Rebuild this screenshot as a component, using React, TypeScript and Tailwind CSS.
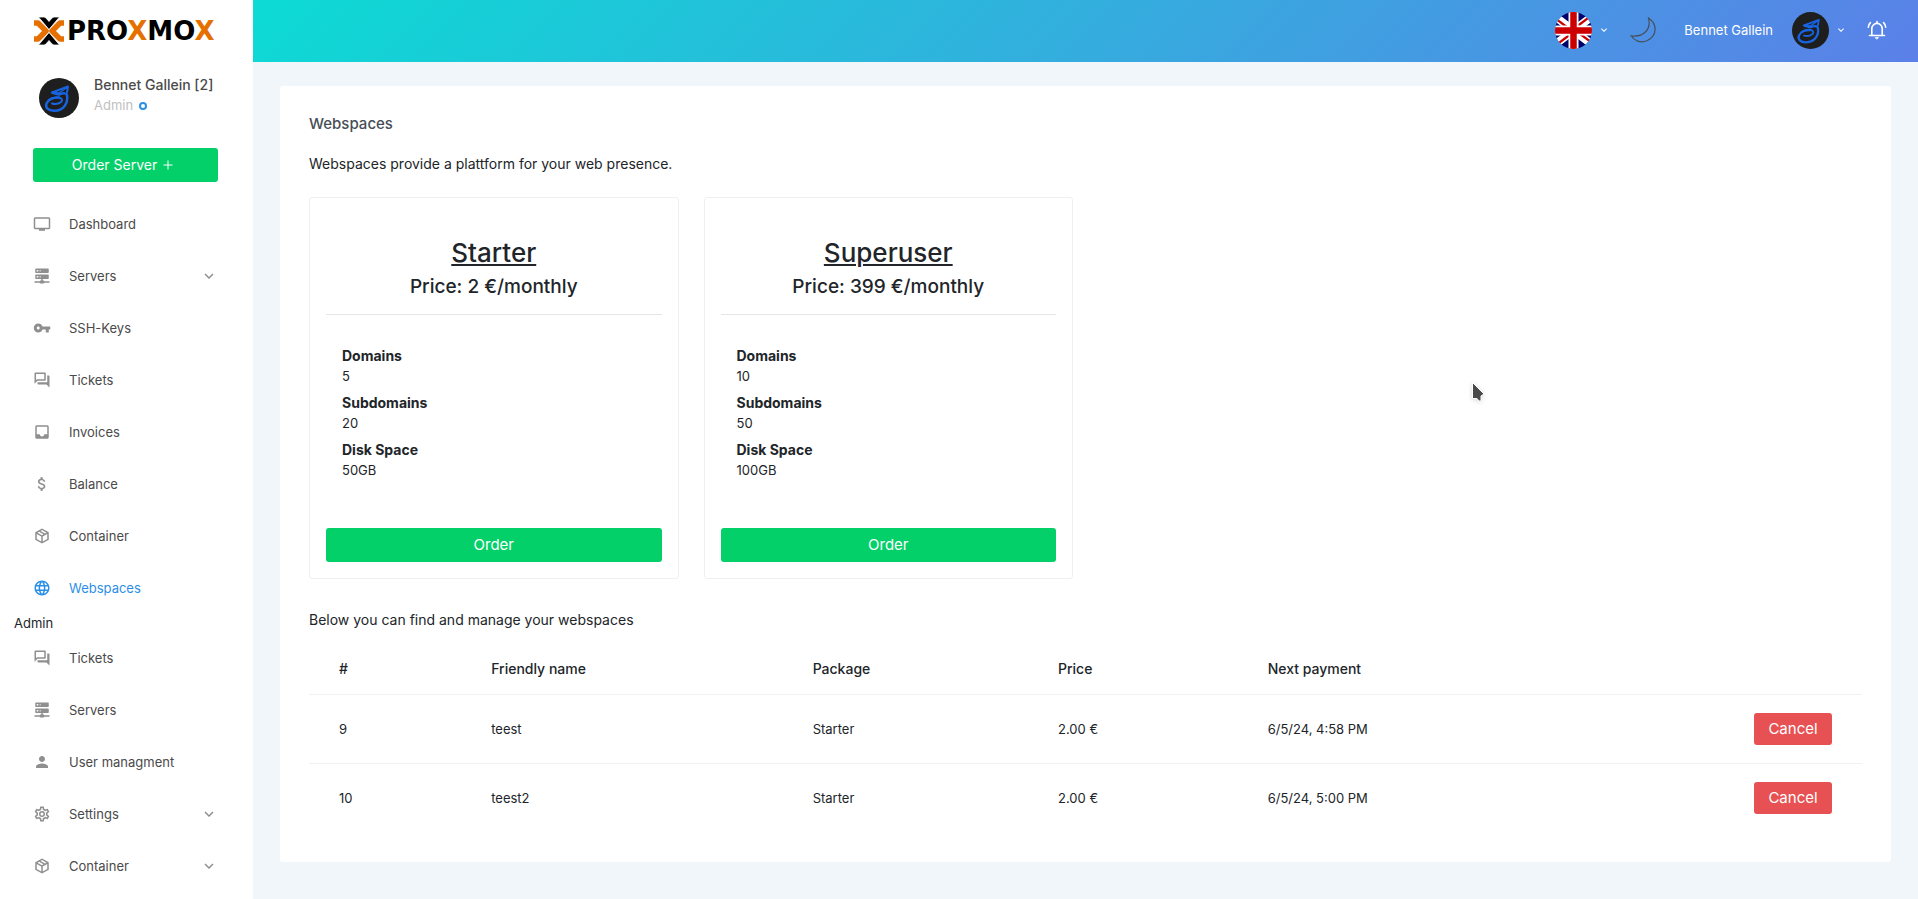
import { useState, type ReactNode } from "react";
import {
  MdAttachMoney,
  MdExpandMore,
  MdInbox,
  MdLanguage,
  MdOutlineQuestionAnswer,
  MdPerson,
  MdTv,
  MdVpnKey,
} from "react-icons/md";

interface Package {
  name: string;
  price: number;
  domains: number;
  subdomains: number;
  disk: string;
}

interface Webspace {
  id: number;
  name: string;
  pkg: string;
  price: string;
  nextPayment: string;
}

interface NavEntry {
  label: string;
  icon: ReactNode;
  expandable?: boolean;
}

const packages: Package[] = [
  { name: "Starter", price: 2, domains: 5, subdomains: 20, disk: "50GB" },
  { name: "Superuser", price: 399, domains: 10, subdomains: 50, disk: "100GB" },
];

const webspaces: Webspace[] = [
  { id: 9, name: "teest", pkg: "Starter", price: "2.00 €", nextPayment: "6/5/24, 4:58 PM" },
  { id: 10, name: "teest2", pkg: "Starter", price: "2.00 €", nextPayment: "6/5/24, 5:00 PM" },
];

function ServerIcon() {
  return (
    <svg viewBox="0 0 24 24" width="18" height="18" fill="currentColor">
      <path d="M13,18H14A1,1 0 0,1 15,19H22V21H15A1,1 0 0,1 14,22H10A1,1 0 0,1 9,21H2V19H9A1,1 0 0,1 10,18H11V16H4A1,1 0 0,1 3,15V11A1,1 0 0,1 4,10H20A1,1 0 0,1 21,11V15A1,1 0 0,1 20,16H13V18M4,2H20A1,1 0 0,1 21,3V7A1,1 0 0,1 20,8H4A1,1 0 0,1 3,7V3A1,1 0 0,1 4,2M9,6H10V4H9V6M9,14H10V12H9V14M5,4V6H7V4H5M5,12V14H7V12H5Z" />
    </svg>
  );
}

function PackageIcon() {
  return (
    <svg viewBox="0 0 24 24" width="18" height="18" fill="currentColor">
      <path d="M21,16.5C21,16.88 20.79,17.21 20.47,17.38L12.57,21.82C12.41,21.94 12.21,22 12,22C11.79,22 11.59,21.94 11.43,21.82L3.53,17.38C3.21,17.21 3,16.88 3,16.5V7.5C3,7.12 3.21,6.79 3.53,6.62L11.43,2.18C11.59,2.06 11.79,2 12,2C12.21,2 12.41,2.06 12.57,2.18L20.47,6.62C20.79,6.79 21,7.12 21,7.5V16.5M12,4.15L10.11,5.22L16,8.61L17.96,7.5L12,4.15M6.04,7.5L12,10.85L13.96,9.75L8.08,6.35L6.04,7.5M5,15.91L11,19.29V12.58L5,9.21V15.91M19,15.91V9.21L13,12.58V19.29L19,15.91Z" />
    </svg>
  );
}

function CogIcon() {
  return (
    <svg viewBox="0 0 24 24" width="18" height="18" fill="currentColor">
      <path d="M12,8A4,4 0 0,1 16,12A4,4 0 0,1 12,16A4,4 0 0,1 8,12A4,4 0 0,1 12,8M12,10A2,2 0 0,0 10,12A2,2 0 0,0 12,14A2,2 0 0,0 14,12A2,2 0 0,0 12,10M10,22C9.75,22 9.54,21.82 9.5,21.58L9.13,18.93C8.5,18.68 7.96,18.34 7.44,17.94L4.95,18.95C4.73,19.03 4.46,18.95 4.34,18.73L2.34,15.27C2.21,15.05 2.27,14.78 2.46,14.63L4.57,12.97L4.5,12L4.57,11L2.46,9.37C2.27,9.22 2.21,8.95 2.34,8.73L4.34,5.27C4.46,5.05 4.73,4.96 4.95,5.05L7.44,6.05C7.96,5.66 8.5,5.32 9.13,5.07L9.5,2.42C9.54,2.18 9.75,2 10,2H14C14.25,2 14.46,2.18 14.5,2.42L14.87,5.07C15.5,5.32 16.04,5.66 16.56,6.05L19.05,5.05C19.27,4.96 19.54,5.05 19.66,5.27L21.66,8.73C21.79,8.95 21.73,9.22 21.54,9.37L19.43,11L19.5,12L19.43,13L21.54,14.63C21.73,14.78 21.79,15.05 21.66,15.27L19.66,18.73C19.54,18.95 19.27,19.04 19.05,18.95L16.56,17.95C16.04,18.34 15.5,18.68 14.87,18.93L14.5,21.58C14.46,21.82 14.25,22 14,22H10M11.25,4L10.88,6.61C9.68,6.86 8.62,7.5 7.85,8.39L5.44,7.35L4.69,8.65L6.8,10.2C6.4,11.37 6.4,12.64 6.8,13.8L4.68,15.36L5.43,16.66L7.86,15.62C8.63,16.5 9.68,17.14 10.87,17.38L11.24,20H12.76L13.13,17.39C14.32,17.14 15.37,16.5 16.14,15.62L18.57,16.66L19.32,15.36L17.2,13.81C17.6,12.64 17.6,11.37 17.2,10.2L19.31,8.65L18.56,7.35L16.15,8.39C15.38,7.5 14.32,6.86 13.12,6.62L12.75,4H11.25Z" />
    </svg>
  );
}

function BellIcon() {
  return (
    <svg viewBox="0 0 20 20" width="20" height="20" fill="none" stroke="white" strokeWidth="1.6" strokeLinecap="round">
      <path d="M2.500 15.500H17.500M4.800 15.300V9a5.200 5.600 0 0 1 10.400 0v6.300M10 1.500v1.500" />
      <path d="M3.400 2.600Q1.400 4.600 1.300 7.200M16.600 2.600Q18.600 4.600 18.700 7.200" />
      <path d="M8.500 17.600h3L10 19z" fill="white" strokeWidth="0.800" />
    </svg>
  );
}

function MoonIcon() {
  return (
    <svg viewBox="0 0 26 26" width="26" height="26" fill="none" stroke="#46505c" strokeWidth="1.2">
      <path d="M18.500 1C28 7.500 27 19 17 23.800C10.500 26.500 4 23.500 1 18.800C13 20.500 21.500 13 18.500 1Z" />
    </svg>
  );
}

function FlagIcon() {
  return (
    <svg viewBox="0 0 37 37" width="37" height="37" className="rounded-full">
      <rect width="37" height="37" fill="#00006b" />
      <path d="M-6 0L43 37M43 0L-6 37" stroke="white" strokeWidth="8" />
      <path d="M-6 1.500L18.500 20M43 -1.500L18.500 17M-6 38.500L18.500 20M43 35.500L18.500 17" stroke="#cc0000" strokeWidth="2.200" />
      <path d="M18.500 0V37M0 18.500H37" stroke="white" strokeWidth="10" />
      <path d="M18.500 0V37M0 18.500H37" stroke="#cc0000" strokeWidth="6.500" />
    </svg>
  );
}

function Avatar({ size }: { size: number }) {
  return (
    <svg viewBox="0 0 40 40" width={size} height={size} className="rounded-full" role="img" aria-label="Avatar">
      <rect width="40" height="40" fill="#1e1e1e" />
      <g fill="none" stroke="#1763e0" strokeLinejoin="round" strokeLinecap="round">
        <path d="M13 14.500L29 8.500L28 14.500" strokeWidth="2" />
        <path d="M13.500 14.800L20 16.500Q27 14 28 17C29.500 26 24 32.500 15.500 32.800C9 33 6 29.500 7.500 25.500C9 21.500 14.500 19 20 19.500" strokeWidth="2.500" />
        <path d="M10 22C14 18.500 23 18.500 23 22C23 24.500 18 27 13 25.500" strokeWidth="2" />
        <path d="M13 14.500L20 15L28 9.500" strokeWidth="1.500" />
      </g>
    </svg>
  );
}

function Logo() {
  return (
    <a href="#home" aria-label="Proxmox" className="flex h-7 items-center gap-0.5">
      <svg viewBox="0 0 32 28" width="32" height="28" className="shrink-0">
        <g fill="none" strokeWidth="5.500" strokeLinejoin="round">
          <path d="M1 6H5L13 14L5 22H1" stroke="#e57000" />
          <path d="M31 6H27L19 14L27 22H31" stroke="#e57000" />
        </g>
        <path d="M5.500 0H10.500Q12 0 13 1L16 4.500L19 1Q20 0 21.500 0H26.500L16 12.500Z" fill="black" stroke="white" strokeWidth="0.800" />
        <path d="M5.500 28H10.500Q12 28 13 27L16 23.500L19 27Q20 28 21.500 28H26.500L16 15.500Z" fill="black" stroke="white" strokeWidth="0.800" />
      </svg>
      <span className="font-['DejaVu_Sans',sans-serif] text-[26px] leading-7 font-bold text-black">
        PRO<span className="text-[#e57000]">X</span>MO<span className="text-[#e57000]">X</span>
      </span>
    </a>
  );
}

const mainNav: NavEntry[] = [
  { label: "Dashboard", icon: <MdTv size={18} /> },
  { label: "Servers", icon: <ServerIcon />, expandable: true },
  { label: "SSH-Keys", icon: <MdVpnKey size={18} /> },
  { label: "Tickets", icon: <MdOutlineQuestionAnswer size={18} /> },
  { label: "Invoices", icon: <MdInbox size={18} /> },
  { label: "Balance", icon: <MdAttachMoney size={18} /> },
  { label: "Container", icon: <PackageIcon /> },
  { label: "Webspaces", icon: <MdLanguage size={18} /> },
];

const adminNav: NavEntry[] = [
  { label: "Tickets", icon: <MdOutlineQuestionAnswer size={18} /> },
  { label: "Servers", icon: <ServerIcon /> },
  { label: "User managment", icon: <MdPerson size={18} /> },
  { label: "Settings", icon: <CogIcon />, expandable: true },
  { label: "Container", icon: <PackageIcon />, expandable: true },
];

function NavList({
  entries,
  active,
  onSelect,
}: {
  entries: NavEntry[];
  active?: string;
  onSelect?: (label: string) => void;
}) {
  return (
    <ul>
      {entries.map((entry) => (
        <li key={entry.label}>
          <a
            href="#nav"
            onClick={() => onSelect?.(entry.label)}
            className={
              entry.label === active
                ? "flex h-[52px] items-center pr-[35px] pl-[33px] text-[#2c8fe6]"
                : "flex h-[52px] items-center pr-[35px] pl-[33px] text-[#4a4a4a]"
            }
          >
            <span className={entry.label === active ? "w-9" : "w-9 text-[#8f8f8f]"}>
              {entry.icon}
            </span>
            <span className="flex-1">{entry.label}</span>
            {entry.expandable ? <MdExpandMore size={18} className="text-[#8f8f8f]" /> : null}
          </a>
        </li>
      ))}
    </ul>
  );
}

function Sidebar() {
  const [active, setActive] = useState("Webspaces");

  return (
    <aside className="w-[253px] shrink-0 bg-white pt-[17px] text-[13px] leading-[18px]">
      <div className="pr-[35px] pl-[33px]">
        <Logo />
        <div className="mt-[29px] flex items-center gap-[15px] pl-1.5">
          <Avatar size={40} />
          <div className="pb-1.5 leading-[21px] whitespace-nowrap">
            <p className="text-sm leading-[21px] font-medium text-[#4a4a4a]">Bennet Gallein [2]</p>
            <p className="flex items-center gap-1.5 text-[#c0c0c0]">
              Admin
              <span className="size-2 rounded-full border-2 border-[#2c8fe6]"></span>
            </p>
          </div>
        </div>
        <button className="mt-[26px] flex h-[34px] w-full cursor-pointer items-center justify-center gap-1.5 rounded-[3px] bg-[#03d069] pr-1.5 text-sm text-white">
          Order Server
          <svg viewBox="0 0 10 10" width="10" height="10" stroke="white" strokeWidth="1">
            <path d="M5 0.500V9.500M0.500 5H9.500" />
          </svg>
        </button>
      </div>
      <nav className="mt-4">
        <NavList entries={mainNav} active={active} onSelect={setActive} />
        <p className="pl-3.5 text-[#212529]">Admin</p>
        <NavList entries={adminNav} />
      </nav>
    </aside>
  );
}

function Header() {
  return (
    <header className="flex h-[62px] items-center justify-end bg-[linear-gradient(135deg,#0cdbd4,#5b80e8)] pr-[31px] pb-0.5 text-white">
      <button aria-label="Language" className="flex cursor-pointer items-center gap-1.5">
        <FlagIcon />
        <MdExpandMore size={12} />
      </button>
      <button aria-label="Dark mode" className="ml-5 cursor-pointer">
        <MoonIcon />
      </button>
      <button className="ml-7 flex cursor-pointer items-center text-[13px]">
        <span className="mr-[19px]">Bennet Gallein</span>
        <Avatar size={37} />
        <MdExpandMore size={12} className="ml-1.5" />
      </button>
      <button aria-label="Notifications" className="ml-5 cursor-pointer">
        <BellIcon />
      </button>
    </header>
  );
}

function PackageCard({ pkg }: { pkg: Package }) {
  return (
    <div className="rounded-[3px] border border-[#f0f0f0] px-4 pt-[39px] pb-4 text-[#212529]">
      <h2 className="text-center text-[26px] leading-8 font-medium underline decoration-2 underline-offset-2">
        {pkg.name}
      </h2>
      <h3 className="mt-1.5 text-center text-[19px] leading-6 font-medium">
        Price: {pkg.price} €/monthly
      </h3>
      <hr className="mt-[15px] border-[#e4e5e5]" />
      <dl className="mt-[31px] px-4">
        <dt className="text-sm leading-5 font-bold">Domains</dt>
        <dd className="mb-[7px]">{pkg.domains}</dd>
        <dt className="text-sm leading-5 font-bold">Subdomains</dt>
        <dd className="mb-[7px]">{pkg.subdomains}</dd>
        <dt className="text-sm leading-5 font-bold">Disk Space</dt>
        <dd>{pkg.disk}</dd>
      </dl>
      <button className="mt-12 h-[34px] w-full cursor-pointer rounded-[3px] bg-[#03d069] text-[15px] text-white">
        Order
      </button>
    </div>
  );
}

function WebspaceTable() {
  return (
    <table className="mt-3.5 w-full table-fixed text-left">
      <thead>
        <tr className="h-[50px] text-sm">
          <th className="w-[9.8%] pl-[30px] font-medium">#</th>
          <th className="w-[20.7%] pl-[30px] font-medium">Friendly name</th>
          <th className="w-[15.8%] pl-[30px] font-medium">Package</th>
          <th className="w-[13.5%] pl-[30px] font-medium">Price</th>
          <th className="pl-[30px] font-medium">Next payment</th>
          <th></th>
        </tr>
      </thead>
      <tbody>
        {webspaces.map((space) => (
          <tr key={space.id} className="h-[69px] border-t border-[#f0f1f1]">
            <td className="pl-[30px]">{space.id}</td>
            <td className="pl-[30px]">{space.name}</td>
            <td className="pl-[30px]">{space.pkg}</td>
            <td className="pl-[30px]">{space.price}</td>
            <td className="pl-[30px]">{space.nextPayment}</td>
            <td className="pr-[30px] text-right">
              <button className="h-8 w-[78px] cursor-pointer rounded-[3px] bg-[#e75153] text-[15px] text-white">
                Cancel
              </button>
            </td>
          </tr>
        ))}
      </tbody>
    </table>
  );
}

export default function App() {
  return (
    <div className="relative flex min-h-screen bg-[#f1f6fa] font-['Inter','Open_Sans',sans-serif] text-[13px] leading-5 text-[#212529]">
      <Sidebar />
      <div className="min-w-0 flex-1">
        <Header />
        <main className="mx-[27px] mt-6 rounded-[3px] bg-white px-[29px] pt-7 pb-[30px]">
          <h1 className="text-[15px] leading-5 font-medium text-[#464d55]">Webspaces</h1>
          <p className="mt-5 text-sm leading-5">Webspaces provide a plattform for your web presence.</p>
          <div className="mt-[23px] grid grid-cols-4 gap-[25px]">
            {packages.map((pkg) => (
              <PackageCard key={pkg.name} pkg={pkg} />
            ))}
          </div>
          <p className="mt-[31px] text-sm leading-5">Below you can find and manage your webspaces</p>
          <WebspaceTable />
        </main>
      </div>
      {/* mouse pointer */}
      <svg viewBox="0 0 14 22" width="14" height="22" className="pointer-events-none absolute top-[381px] left-[1471px] drop-shadow-sm">
        <path d="M1.500 1.500L13 13L10 15V20H8L6 17.500H1.500Z" fill="#4a4a4a" stroke="white" strokeWidth="1" />
      </svg>
    </div>
  );
}
